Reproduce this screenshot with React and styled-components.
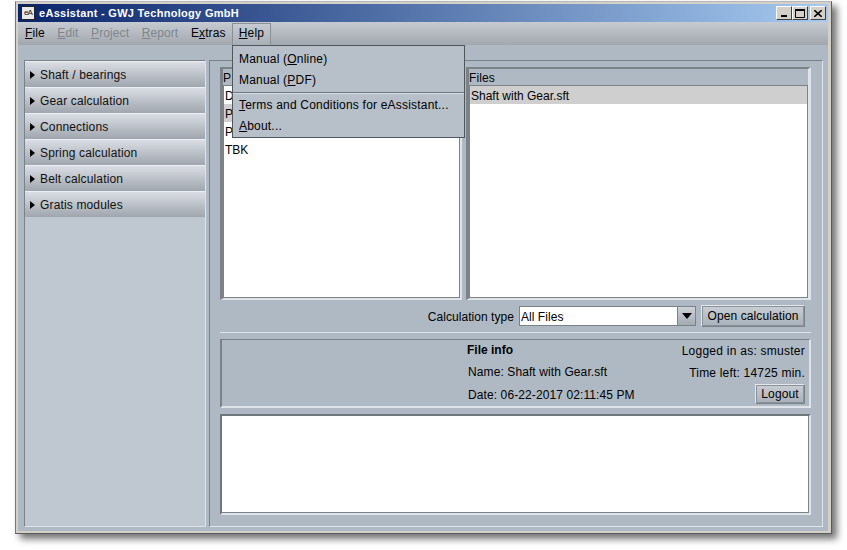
import React from 'react';
import styled, {createGlobalStyle} from "styled-components";

const Global = createGlobalStyle`
    html, body {
        margin: 0;
        padding: 0;
        background: #ffffff;
    }
    body {
        font-family: "Liberation Sans", Arial, sans-serif;
        font-size: 12px;
        color: #000000;
    }
`;

const Page = styled.div`
    width: 847px;
    height: 550px;
    overflow: hidden;
    padding: 1px 0 0 15px;
    box-sizing: border-box;
`;

const Window = styled.div`
    position: relative;
    width: 817px;
    height: 533px;
    box-sizing: border-box;
    border: 1px solid #5a5a5a;
    border-top-color: #b8b8b8;
    border-left-color: #777777;
    background: #d4d0c8;
    padding: 2px 3px 2px 2px;
    box-shadow: 5px 5px 7px rgba(0, 0, 0, 0.55);
    display: flex;
    flex-direction: column;
`;

const TitleBar = styled.div`
    height: 18px;
    flex: none;
    display: flex;
    align-items: center;
    padding: 0 2px 0 3px;
    background: linear-gradient(to right, #0a246a, #a6caf0);
`;

const AppIcon = styled.div`
    width: 14px;
    height: 14px;
    box-sizing: border-box;
    border: 1px solid #222222;
    background: #e8e8e8;
    color: #111111;
    font-size: 8px;
    line-height: 12px;
    text-align: center;
    letter-spacing: -1px;
    margin-right: 4px;
`;

const TitleText = styled.div`
    flex: 1;
    color: #ffffff;
    font-weight: bold;
    font-size: 11px;
    letter-spacing: 0.3px;
`;

const WinButton = styled.div`
    width: 16px;
    height: 14px;
    box-sizing: border-box;
    background: #d4d0c8;
    border: 1px solid;
    border-color: #ffffff #404040 #404040 #ffffff;
    margin-left: ${({$gap}) => $gap || 0}px;
    display: flex;
    align-items: center;
    justify-content: center;
`;

const MenuBar = styled.div`
    height: 23px;
    flex: none;
    display: flex;
    align-items: stretch;
    padding-left: 0.7px;
    background: linear-gradient(to bottom, #c6cbd2, #a2a8ae);
`;

const MenuItem = styled.div`
    padding: 0 6.3px;
    margin-top: 1px;
    box-sizing: border-box;
    line-height: 21px;
    letter-spacing: 0.1px;
    color: ${({$off}) => $off ? '#7f868c' : '#000000'};
`;

const OpenMenuItem = styled(MenuItem)`
    border: 1px solid #8a9096;
    border-bottom: none;
    background: linear-gradient(to bottom, #c6cbd2, #a9afb6);
    line-height: 19px;
    padding: 0 6px;
`;

const Mnemonic = styled.span`
    text-decoration: underline;
`;

const Popup = styled.div`
    position: absolute;
    left: 216px;
    top: 43px;
    width: 233px;
    height: 93px;
    box-sizing: border-box;
    border: 1px solid #4f565c;
    background: #b7bfc9;
    padding-top: 3px;
    z-index: 5;
`;

const PopupItem = styled.div`
    height: 21px;
    line-height: 20px;
    padding-left: 6px;
    letter-spacing: 0.2px;
`;

const PopupSep = styled.div`
    margin: 1px 0 1px;
    border-top: 1px solid #6f767c;
    border-bottom: 1px solid #d5dae0;
`;

const Content = styled.div`
    flex: 1;
    min-height: 0;
    background: #afb9c3;
    padding: 15px 5px 4px 6px;
    display: flex;
    gap: 3px;
`;

const Sidebar = styled.div`
    width: 182px;
    flex: none;
    box-sizing: border-box;
    background: #bfc7d0;
    border: 1px solid;
    border-color: #7a8288 #dfe4ea #dfe4ea #7a8288;
`;

const Accordion = styled.div`
    height: 26px;
    box-sizing: border-box;
    display: flex;
    align-items: center;
    padding-left: 5px;
    gap: 5px;
    letter-spacing: 0.15px;
    color: #111111;
    background: linear-gradient(to bottom, #dadde4, #a0a6ae);
    border-top: 1px solid #eceff3;
`;

const Caret = styled.div`
    width: 0;
    height: 0;
    border-left: 5px solid #000000;
    border-top: 4px solid transparent;
    border-bottom: 4px solid transparent;
`;

const MainPanel = styled.div`
    flex: 1;
    box-sizing: border-box;
    border: 1px solid;
    border-color: #7a8288 #dfe4ea #dfe4ea #7a8288;
    padding: 6px 11px 11px 10px;
    display: flex;
    flex-direction: column;
`;

const Lists = styled.div`
    height: 233px;
    flex: none;
    display: flex;
    gap: 4px;
`;

const ListBox = styled.div`
    width: ${({$w}) => $w}px;
    flex: none;
    box-sizing: border-box;
    border-style: solid;
    border-color: #7b8389 #dfe4ea #dfe4ea #7b8389;
    border-width: 2px ${({$right}) => $right}px 2px 4px;
    display: flex;
    flex-direction: column;
`;

const ListHeader = styled.div`
    height: 16px;
    flex: none;
    line-height: 18px;
    background: #afb9c3;
    border-bottom: 1px solid #7b8389;
    letter-spacing: 0.1px;
    margin-left: -1px;
`;

const ListBody = styled.div`
    flex: 1;
    background: #ffffff;
    border-right: 1px solid #7b8389;
    border-bottom: 1px solid #7b8389;
`;

const ListRow = styled.div`
    height: 18px;
    line-height: 20px;
    padding-left: 1px;
    background: ${({$sel}) => $sel ? '#cfcfcf' : 'transparent'};
`;

const CalcRow = styled.div`
    height: 33px;
    flex: none;
    box-sizing: border-box;
    display: flex;
    align-items: center;
    justify-content: flex-end;
    padding-right: 6px;
    border-bottom: 1px solid #dfe4ea;
    letter-spacing: 0.05px;
`;

const CalcText = styled.span`
    display: block;
    padding-top: 2px;
`;

const Combo = styled.div`
    width: 177px;
    height: 20px;
    margin-left: 5px;
    box-sizing: border-box;
    border: 1px solid #7b8389;
    background: #ffffff;
    display: flex;
    align-items: center;
    padding-left: 1px;
    justify-content: space-between;
`;

const ComboArrow = styled.div`
    width: 18px;
    height: 18px;
    box-sizing: border-box;
    background: linear-gradient(to bottom, #cdd2d9, #a4aab2);
    border-left: 1px solid #7b8389;
    display: flex;
    align-items: center;
    justify-content: center;
    &::after {
        content: "";
        border-top: 6px solid #000000;
        border-left: 5px solid transparent;
        border-right: 5px solid transparent;
    }
`;

const Button = styled.div`
    box-sizing: border-box;
    white-space: nowrap;
    text-align: center;
    border: 1px solid;
    border-color: #e4e8ed #7b8389 #7b8389 #e4e8ed;
    outline: 1px solid #8a9299;
    outline-offset: -2px;
    background: linear-gradient(to bottom, #c9ced5, #a9b0b8);
    letter-spacing: 0.1px;
`;

const OpenButton = styled(Button)`
    width: 104px;
    height: 22px;
    line-height: 20px;
    margin-left: 5px;
`;

const LogoutButton = styled(Button)`
    width: 50px;
    height: 20px;
    line-height: 19px;
    margin-top: -2px;
`;

const InfoPanel = styled.div`
    height: 69px;
    flex: none;
    margin-top: 6px;
    box-sizing: border-box;
    border-style: solid;
    border-color: #7b8389 #dfe4ea #dfe4ea #7b8389;
    border-width: 1px 2px 2px 2px;
    display: flex;
    justify-content: space-between;
    padding: 0 4px 0 246px;
`;

const InfoColumn = styled.div`
    display: flex;
    flex-direction: column;
    align-items: ${({$right}) => $right ? 'flex-end' : 'flex-start'};
`;

const InfoLine = styled.div`
    height: 23px;
    line-height: ${({$lh}) => $lh || 22}px;
    letter-spacing: ${({$spacing}) => $spacing}px;
`;

const InfoTitle = styled(InfoLine)`
    font-weight: bold;
    margin-left: -1px;
`;

const LogBox = styled.div`
    height: 101px;
    flex: none;
    margin-top: 6px;
    box-sizing: border-box;
    border-style: solid;
    border-color: #6f777d #dfe4ea #dfe4ea #6f777d;
    border-width: 2px;
    display: flex;
`;

const sidebarItems = [
    'Shaft / bearings',
    'Gear calculation',
    'Connections',
    'Spring calculation',
    'Belt calculation',
    'Gratis modules',
];

function App() {
    return (
        <>
            <Global/>
            <Page>
                <Window>
                    <TitleBar>
                        <AppIcon>eA</AppIcon>
                        <TitleText>eAssistant - GWJ Technology GmbH</TitleText>
                        <WinButton>
                            <svg width="8" height="8" viewBox="0 0 8 8"><rect x="1" y="6" width="6" height="2" fill="#000"/></svg>
                        </WinButton>
                        <WinButton>
                            <svg width="10" height="9" viewBox="0 0 10 9"><path d="M0.5 1.5h9v7h-9z" fill="none" stroke="#000"/><rect x="0" y="0" width="10" height="2" fill="#000"/></svg>
                        </WinButton>
                        <WinButton $gap={2}>
                            <svg width="8" height="7" viewBox="0 0 8 7"><path d="M0 0l8 7M8 0l-8 7" stroke="#000" strokeWidth="1.6" fill="none"/></svg>
                        </WinButton>
                    </TitleBar>
                    <MenuBar>
                        <MenuItem><Mnemonic>F</Mnemonic>ile</MenuItem>
                        <MenuItem $off><Mnemonic>E</Mnemonic>dit</MenuItem>
                        <MenuItem $off><Mnemonic>P</Mnemonic>roject</MenuItem>
                        <MenuItem $off><Mnemonic>R</Mnemonic>eport</MenuItem>
                        <MenuItem>E<Mnemonic>x</Mnemonic>tras</MenuItem>
                        <OpenMenuItem><Mnemonic>H</Mnemonic>elp</OpenMenuItem>
                    </MenuBar>
                    <Popup>
                        <PopupItem>Manual (<Mnemonic>O</Mnemonic>nline)</PopupItem>
                        <PopupItem>Manual (<Mnemonic>P</Mnemonic>DF)</PopupItem>
                        <PopupSep/>
                        <PopupItem><Mnemonic>T</Mnemonic>erms and Conditions for eAssistant...</PopupItem>
                        <PopupItem><Mnemonic>A</Mnemonic>bout...</PopupItem>
                    </Popup>
                    <Content>
                        <Sidebar>
                            {sidebarItems.map(item => (
                                <Accordion key={item}><Caret/>{item}</Accordion>
                            ))}
                        </Sidebar>
                        <MainPanel>
                            <Lists>
                                <ListBox $w={242} $right={2}>
                                    <ListHeader>P</ListHeader>
                                    <ListBody>
                                        <ListRow>D</ListRow>
                                        <ListRow $sel>P</ListRow>
                                        <ListRow>P</ListRow>
                                        <ListRow>TBK</ListRow>
                                    </ListBody>
                                </ListBox>
                                <ListBox $w={345} $right={3}>
                                    <ListHeader>Files</ListHeader>
                                    <ListBody>
                                        <ListRow $sel>Shaft with Gear.sft</ListRow>
                                    </ListBody>
                                </ListBox>
                            </Lists>
                            <CalcRow>
                                <CalcText>Calculation type</CalcText>
                                <Combo><CalcText>All Files</CalcText><ComboArrow/></Combo>
                                <OpenButton>Open calculation</OpenButton>
                            </CalcRow>
                            <InfoPanel>
                                <InfoColumn>
                                    <InfoTitle $lh={20}>File info</InfoTitle>
                                    <InfoLine $spacing={0.1} $lh={20}>Name: Shaft with Gear.sft</InfoLine>
                                    <InfoLine $spacing={0.1}>Date: 06-22-2017 02:11:45 PM</InfoLine>
                                </InfoColumn>
                                <InfoColumn $right>
                                    <InfoLine $spacing={0.25}>Logged in as: smuster</InfoLine>
                                    <InfoLine $spacing={0.2} $lh={20}>Time left: 14725 min.</InfoLine>
                                    <LogoutButton>Logout</LogoutButton>
                                </InfoColumn>
                            </InfoPanel>
                            <LogBox>
                                <ListBody/>
                            </LogBox>
                        </MainPanel>
                    </Content>
                </Window>
            </Page>
        </>
    );
}

export default App;
